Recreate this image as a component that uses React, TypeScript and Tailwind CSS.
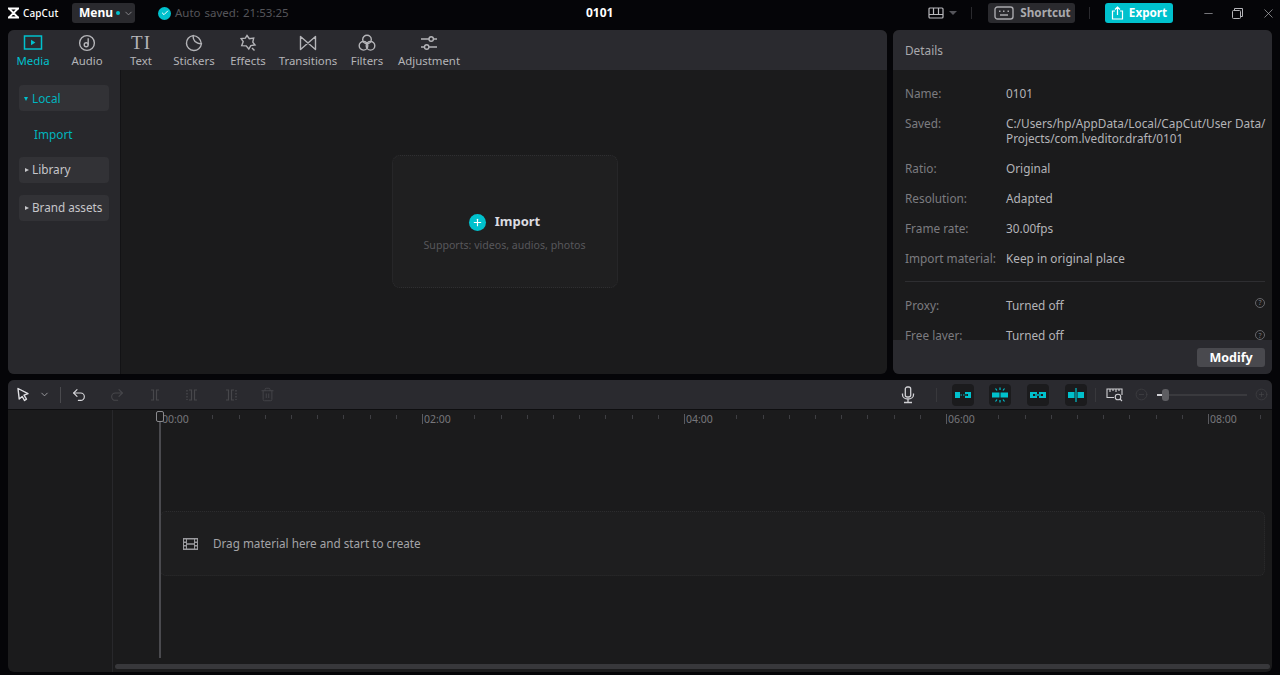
import React from 'react';
import { Minus, X, Undo2, Redo2, Trash2, ChevronDown, CirclePlus, CircleMinus, Check, Plus } from 'lucide-react';

const font = { fontFamily: '"Noto Sans", "Liberation Sans", sans-serif' };

const Glyph: React.FC<{ w?: number; h?: number; box?: string; className?: string; children: React.ReactNode }> = ({
  w = 20,
  h = 20,
  box = '0 0 20 20',
  className = '',
  children
}) => (
  <svg width={w} height={h} viewBox={box} fill="none" stroke="currentColor" strokeWidth="1.4" className={className}>
    {children}
  </svg>
);

const tabs: { label: string; width: string; icon: React.ReactNode; active?: boolean }[] = [
  {
    label: 'Media',
    width: 'w-[50px]',
    active: true,
    icon: (
      <Glyph>
        <rect x="1.5" y="3" width="17" height="13" strokeWidth="1.5" />
        <path d="M8 6.8v5.4l4.4-2.7z" fill="currentColor" stroke="none" />
      </Glyph>
    )
  },
  {
    label: 'Audio',
    width: 'w-[58px]',
    icon: (
      <Glyph>
        <circle cx="10" cy="10" r="7.4" />
        <circle cx="9.2" cy="11.8" r="2" />
        <path d="M11.2 11.8V5.2" />
      </Glyph>
    )
  },
  {
    label: 'Text',
    width: 'w-[50px]',
    icon: (
      <span className="text-[19px] leading-[20px] tracking-[1px]" style={{ fontFamily: '"Liberation Serif", serif' }}>
        TI
      </span>
    )
  },
  {
    label: 'Stickers',
    width: 'w-[56px]',
    icon: (
      <Glyph>
        <path d="M17.4 11A7.5 7.5 0 1 1 9 2.6c0 4 1 8 8.4 8.4z" />
        <path d="M9 2.6c4.400 0 8 3.500 8.400 8.400" />
      </Glyph>
    )
  },
  {
    label: 'Effects',
    width: 'w-[52px]',
    icon: (
      <Glyph>
        <path d="M9 2.500l2.300 3.200 4.400-.7-.9 4.200 2.200 2.800-4.200.6-2 3.400-2.600-3.100-4.500-.2 1.500-4-2.100-3.200 4.300-.3z" />
        <path d="M14 15l2.500 2.500" />
      </Glyph>
    )
  },
  {
    label: 'Transitions',
    width: 'w-[68px]',
    icon: (
      <Glyph>
        <path d="M2.500 3.500v13L17.500 3.500v13z" strokeLinejoin="round" />
      </Glyph>
    )
  },
  {
    label: 'Filters',
    width: 'w-[50px]',
    icon: (
      <Glyph>
        <circle cx="10" cy="6.500" r="4.300" />
        <circle cx="6.500" cy="12.800" r="4.300" />
        <circle cx="13.500" cy="12.800" r="4.300" />
      </Glyph>
    )
  },
  {
    label: 'Adjustment',
    width: 'w-[74px]',
    icon: (
      <Glyph>
        <path d="M2 6h8M14.500 6H18M2 14h3.500M10 14h8" />
        <circle cx="12.200" cy="6" r="2.200" />
        <circle cx="7.700" cy="14" r="2.200" />
      </Glyph>
    )
  }
];

const details: { label: string; value: React.ReactNode; height: string }[] = [
  { label: 'Name:', value: '0101', height: 'h-[30px]' },
  {
    label: 'Saved:',
    value: (
      <>
        C:/Users/hp/AppData/Local/CapCut/User Data/
        <br />
        Projects/com.lveditor.draft/0101
      </>
    ),
    height: 'h-[45px]'
  },
  { label: 'Ratio:', value: 'Original', height: 'h-[30px]' },
  { label: 'Resolution:', value: 'Adapted', height: 'h-[30px]' },
  { label: 'Frame rate:', value: '30.00fps', height: 'h-[30px]' },
  { label: 'Import material:', value: 'Keep in original place', height: 'h-[30px]' }
];

const HelpDot = () => (
  <span className="flex h-[10px] w-[10px] items-center justify-center rounded-full border border-[#66666a] text-[7px] leading-none text-[#77777b]">
    ?
  </span>
);

const SplitIcon: React.FC<{ mode: number }> = ({ mode }) => (
  <Glyph w={14} h={14} box="0 0 14 14" className="text-[#47474b]">
    <path d="M3 2h2.500v10H3M11 2H8.500v10H11" strokeWidth="1.200" />
    {mode === 1 && <path d="M1 2v10" strokeDasharray="1.500 1.500" />}
    {mode === 2 && <path d="M13 2v10" strokeDasharray="1.500 1.500" />}
  </Glyph>
);

const SnapButton: React.FC<{ children: React.ReactNode }> = ({ children }) => (
  <span className="flex h-[22px] w-[22px] items-center justify-center rounded-[4px] bg-[#1b1b1d] text-[#00c1cd]">
    <svg width="18" height="18" viewBox="0 0 18 18" fill="none" stroke="currentColor" strokeWidth="1.200">
      {children}
    </svg>
  </span>
);

const rulerGroups = ['00:00', '02:00', '04:00', '06:00', '08:00'];

const App: React.FC = () => {
  return (
    <div className="flex h-[675px] w-[1280px] flex-col overflow-hidden bg-[#050508] text-[11.8px] text-[#c6c6ca]" style={font}>
      {/* Title bar */}
      <header className="relative flex h-[30px] shrink-0 items-start pt-[3px]">
        <div className="ml-[7px] flex h-[20px] w-[65px] items-center gap-[3px] text-white">
          <svg width="13" height="12" viewBox="0 0 13 12" fill="none" stroke="currentColor" strokeWidth="1.800">
            <path d="M1 1.500h11M1 10.500h11M2 1.500l4.500 4.500L2 10.500M11 1.500L6.500 6l4.500 4.500" />
          </svg>
          <span className="text-[10px] font-medium leading-none tracking-[0.1px]">CapCut</span>
        </div>
        <button className="flex h-[20px] w-[63px] items-center rounded-[3px] bg-[#2a2a2e] pl-[7px] text-[12px] font-bold text-white">
          Menu
          <span className="ml-[3px] h-[4px] w-[4px] rounded-full bg-[#00c1cd]" />
          <ChevronDown size={11} className="ml-[3px] text-[#8b8b90]" />
        </button>
        <div className="ml-[23px] flex h-[20px] items-center gap-[4px]">
          <span className="flex h-[13px] w-[13px] items-center justify-center rounded-full bg-[#00c1cd] text-white">
            <Check size={8} strokeWidth={3} />
          </span>
          <span className="text-[11.5px] text-[#55555a] [word-spacing:1px]">Auto saved: 21:53:25</span>
        </div>
        <div className="absolute left-[586px] top-[3px] flex h-[20px] items-center text-[12px] font-bold text-white">0101</div>
        <div className="ml-auto flex h-[20px] items-center text-[#b9b9bd]">
          <svg width="16" height="12" viewBox="0 0 16 12" fill="none" stroke="currentColor" strokeWidth="1.200">
            <rect x="1" y="1" width="14" height="10" rx="1" />
            <path d="M1 7.500h14M5.500 1v6.500M10.500 1v6.500" />
          </svg>
          <span className="ml-[5px] h-0 w-0 border-x-[4px] border-t-[4px] border-x-transparent border-t-[#55555a]" />
          <span className="ml-[14px] h-[12px] w-px bg-[#2a2a2e]" />
          <button className="ml-[16px] flex h-[20px] w-[87px] items-center justify-center gap-[6px] rounded-[3px] bg-[#2a2a2e] pl-[2px] text-[11.7px] font-bold text-[#a9a9ad]">
            <svg width="20" height="14" viewBox="0 0 20 14" fill="none" stroke="currentColor" strokeWidth="1.400">
              <rect x="1" y="1" width="18" height="12" rx="2.500" />
              <path d="M5 5.300h1.500M9 5.300h1.500M13.500 5.300H15M6 9h8" />
            </svg>
            Shortcut
          </button>
          <span className="ml-[14px] h-[12px] w-px bg-[#2a2a2e]" />
          <button className="ml-[15px] flex h-[20px] w-[68px] items-center justify-center gap-[5px] rounded-[3px] bg-[#00c1cd] text-[11.7px] font-bold text-white">
            <svg width="13" height="14" viewBox="0 0 13 14" fill="none" stroke="currentColor" strokeWidth="1.200">
              <path d="M4 5H1.500v8h10V5H9M6.500 9V1.200M4 3.500l2.500-2.500L9 3.500" />
            </svg>
            Export
          </button>
          <Minus size={13} strokeWidth={1.200} className="ml-[29px] text-[#b4b4b8]" />
          <svg width="11" height="11" viewBox="0 0 11 11" fill="none" stroke="currentColor" strokeWidth="1" className="ml-[17px] text-[#b4b4b8]">
            <rect x="0.500" y="2.500" width="8" height="8" rx="1" />
            <path d="M2.500 2.500V.500h8v8H8.500" />
          </svg>
          <X size={15} strokeWidth={1.100} className="ml-[18px] mr-[4px] text-[#b4b4b8]" />
        </div>
      </header>

      {/* Upper panels */}
      <div className="mx-[8px] flex h-[344px] shrink-0 gap-[6px]">
        <section className="flex w-[879px] flex-col overflow-hidden rounded-[6px] bg-[#1b1b1c]">
          <nav className="flex h-[40px] shrink-0 bg-[#2a2a2f]">
            {tabs.map((tab) => (
              <div
                key={tab.label}
                className={`flex flex-col items-center ${tab.width} ${tab.active ? 'text-[#00c1cd]' : 'text-[#b4b4b8]'}`}
              >
                <span className="mt-[3px] flex h-[20px] items-center">{tab.icon}</span>
                <span className="whitespace-nowrap text-[11.4px] leading-[15px]">{tab.label}</span>
              </div>
            ))}
          </nav>
          <div className="flex min-h-0 flex-1">
            <aside className="flex w-[113px] shrink-0 flex-col border-r border-[#131315] bg-[#28282c] px-[11px] pt-[15px]">
              <div className="flex h-[26px] items-center rounded-[4px] bg-[#323236] pl-[5px] pt-[1px] text-[#00b4bf]">
                <span className="h-0 w-0 border-x-[2.5px] border-t-[4px] border-x-transparent border-t-[#00c1cd]" />
                <span className="ml-[4px]">Local</span>
              </div>
              <div className="flex h-[46px] items-center pl-[15px] pt-[1px] text-[#00b4bf]">Import</div>
              <div className="flex h-[26px] items-center rounded-[4px] bg-[#323236] pl-[6px]">
                <span className="h-0 w-0 border-y-[2.5px] border-l-[4px] border-y-transparent border-l-[#c6c6ca]" />
                <span className="ml-[3px]">Library</span>
              </div>
              <div className="mt-[12px] flex h-[26px] items-center rounded-[4px] bg-[#323236] pl-[6px]">
                <span className="h-0 w-0 border-y-[2.5px] border-l-[4px] border-y-transparent border-l-[#c6c6ca]" />
                <span className="ml-[3px] whitespace-nowrap text-[11.7px]">Brand assets</span>
              </div>
            </aside>
            <div className="flex flex-1 items-start justify-center pl-[1px] pt-[85px]">
              <div className="flex h-[133px] w-[226px] flex-col items-center rounded-[8px] border border-dotted border-[#2f2f31] bg-[#1f1f20] pt-[56px]">
                <div className="flex h-[20px] items-center gap-[9px]">
                  <span className="flex h-[17px] w-[17px] items-center justify-center rounded-full bg-[#00c1cd] text-white">
                    <Plus size={11} strokeWidth={2.500} />
                  </span>
                  <span className="text-[13px] font-bold text-[#dcdce0]">Import</span>
                </div>
                <div className="mt-[5px] text-[10.6px] leading-[16px] text-[#58585c]">Supports: videos, audios, photos</div>
              </div>
            </div>
          </div>
        </section>

        <section className="flex w-[379px] flex-col overflow-hidden rounded-[6px] bg-[#1b1b1c]">
          <div className="flex h-[40px] shrink-0 items-center bg-[#2a2a2f] pl-[12px] pt-[1px] text-[#a9a9ad]">Details</div>
          <div className="min-h-0 flex-1 overflow-hidden px-[12px] pt-[9px]">
            {details.map((row) => (
              <div key={row.label} className={`flex ${row.height}`}>
                <span className="w-[101px] shrink-0 pt-[6px] leading-[17px] text-[#7c7c80]">{row.label}</span>
                <span className="whitespace-nowrap pt-[7px] leading-[15px] text-[#b4b4b8]">{row.value}</span>
              </div>
            ))}
            <div className="mt-[7px] mr-[-5px] h-px w-[360px] bg-[#2e2e31]" />
            <div className="mt-[2px] flex h-[30px] items-center pt-[14px]">
              <span className="w-[101px] text-[#7c7c80]">Proxy:</span>
              <span className="text-[#b4b4b8]">Turned off</span>
              <span className="ml-auto mb-[7px] mr-[-5px]"><HelpDot /></span>
            </div>
            <div className="mt-[10px] flex h-[24px] items-center">
              <span className="w-[101px] text-[#7c7c80]">Free layer:</span>
              <span className="text-[#b4b4b8]">Turned off</span>
              <span className="ml-auto mb-[2px] mr-[-5px]"><HelpDot /></span>
            </div>
          </div>
          <div className="flex h-[34px] shrink-0 items-start justify-end bg-[#2a2a2f] pr-[7px] pt-[8px]">
            <button className="h-[19px] w-[68px] rounded-[3px] bg-[#49494e] text-[12.5px] font-bold leading-[19px] text-white">
              Modify
            </button>
          </div>
        </section>
      </div>

      {/* Timeline */}
      <section className="relative mx-[8px] mt-[6px] flex h-[292px] shrink-0 flex-col overflow-hidden rounded-[6px] bg-[#1b1b1c]">
        <div className="flex h-[30px] shrink-0 items-center border-b border-[#0e0e10] bg-[#2a2a2f]">
          <svg width="14" height="15" viewBox="0 0 14 15" fill="none" stroke="#e0e0e4" strokeWidth="1.400" className="ml-[8px]" strokeLinejoin="round">
            <path d="M2 1.500l10 5.200-4 1.500 2.500 4-2 1.300-2.300-4-3 2.500z" />
          </svg>
          <ChevronDown size={11} className="ml-[9px] text-[#a0a0a4]" />
          <span className="ml-[10px] h-[16px] w-px bg-[#4a4a4e]" />
          <Undo2 size={16} strokeWidth={1.700} className="ml-[10px] text-[#d8d8dc]" />
          <Redo2 size={16} strokeWidth={1.600} className="ml-[22px] text-[#47474b]" />
          <span className="ml-[23px] flex"><SplitIcon mode={0} /></span>
          <span className="ml-[24px] flex"><SplitIcon mode={1} /></span>
          <span className="ml-[23px] flex"><SplitIcon mode={2} /></span>
          <Trash2 size={15} strokeWidth={1.400} className="ml-[23px] text-[#47474b]" />
          <div className="ml-auto flex items-center">
            <svg width="14" height="18" viewBox="0 0 14 18" fill="none" stroke="#d0d0d4" strokeWidth="1.300">
              <rect x="4.300" y="1" width="5.400" height="10" rx="2" />
              <path d="M1.500 7.500v1.500a5.500 4 0 0 0 11 0V7.500M7 13v3M3 16.500h8" />
            </svg>
            <span className="ml-[21px] h-[14px] w-px bg-[#38383c]" />
            <span className="ml-[15px] flex">
              <SnapButton>
                <rect x="1" y="6" width="5" height="6" fill="currentColor" stroke="none" />
                <path d="M11 6h6v6h-6v-2h3V8h-3z" fill="currentColor" stroke="none" />
                <path d="M6.500 9h6" strokeDasharray="1.500 1" />
              </SnapButton>
            </span>
            <span className="ml-[15px] flex">
              <SnapButton>
                <rect x="1" y="6.500" width="7.500" height="5" fill="currentColor" stroke="none" />
                <rect x="9.500" y="6.500" width="7.500" height="5" fill="currentColor" stroke="none" />
                <path d="M9 1.500v2.500M4.500 2.500L6 4.500M13.500 2.500L12 4.500M9 14v2.500M4.500 15.500L6 13.500M13.500 15.500L12 13.500" />
              </SnapButton>
            </span>
            <span className="ml-[16px] flex">
              <SnapButton>
                <path d="M1 6h7v2H4v2h4v2H1zM17 6h-7v2h4v2h-4v2h7z" fill="currentColor" stroke="none" />
                <path d="M6 9h6" strokeWidth="1.600" />
              </SnapButton>
            </span>
            <span className="ml-[16px] flex">
              <SnapButton>
                <rect x="1" y="6" width="6.500" height="6" fill="currentColor" stroke="none" />
                <rect x="10.500" y="6" width="6.500" height="6" fill="currentColor" stroke="none" />
                <path d="M9 2v14" />
              </SnapButton>
            </span>
            <span className="ml-[8px] h-[14px] w-px bg-[#38383c]" />
            <svg width="17" height="15" viewBox="0 0 17 15" fill="none" stroke="#d0d0d4" strokeWidth="1.100" className="ml-[10px]">
              <path d="M8 10.500H1V2h15v6" />
              <path d="M4 2v3M7 2v2M10 2v3M13 2v2" />
              <circle cx="12" cy="10" r="2.800" />
              <path d="M14 12l2 2" />
            </svg>
            <CircleMinus size={13} strokeWidth={1.100} className="ml-[12px] text-[#47474b]" />
            <div className="relative ml-[9px] h-[2px] w-[90px] bg-[#3a3a3e]">
              <span className="absolute left-0 top-0 h-[2px] w-[6px] bg-[#d0d0d4]" />
              <span className="absolute left-[5px] top-[-5px] h-[12px] w-[7px] rounded-[3px] bg-[#5e5e62]" />
            </div>
            <CirclePlus size={13} strokeWidth={1.100} className="ml-[8px] mr-[4px] text-[#47474b]" />
          </div>
        </div>

        <div className="flex min-h-0 flex-1">
          <div className="w-[105px] shrink-0 border-r border-[#28282b]" />
          <div className="relative min-w-0 flex-1">
            <div className="flex h-[20px] pl-[47px]">
              {rulerGroups.map((time) => (
                <div key={time} className="flex w-[262px] shrink-0">
                  <div className="mt-[4px] h-[10px] w-[52.4px] shrink-0 border-l border-[#5a5a5e] pl-[1px] text-[10.5px] leading-[10px] text-[#77777b]">
                    {time}
                  </div>
                  {Array.from({ length: 8 }).map((_, i) => (
                    <div key={i} className="mt-[5px] h-[4px] w-[26.2px] shrink-0 border-l border-[#3e3e42]" />
                  ))}
                </div>
              ))}
            </div>
            <div className="ml-[47px] mr-[7px] mt-[81px] flex h-[65px] items-center rounded-[6px] border border-dotted border-[#2c2c2e] bg-[#1e1e1f] pl-[22px]">
              <svg width="15" height="12" viewBox="0 0 15 12" className="text-[#9a9a9e]" fill="currentColor">
                <path d="M0 0h15v12H0zM3 1.500H1v2h2zm0 3.500H1v2h2zm0 3.500H1v2h2zm11-7h-2v2h2zm0 3.500h-2v2h2zm0 3.500h-2v2h2zM11 1.500H4v3.700h7zm0 5.300H4v3.700h7z" fillRule="evenodd" />
              </svg>
              <span className="ml-[15px] text-[11.7px] text-[#a4a4a8]">Drag material here and start to create</span>
            </div>
            <div className="absolute bottom-[3px] left-[2px] right-[2px] h-[5px] rounded-full bg-[#38383b]" />
          </div>
        </div>

        {/* Playhead */}
        <div className="absolute left-[148px] top-[31px] flex flex-col items-center">
          <span className="h-[11px] w-[8px] rounded-[2px] border border-[#8a8a8e] bg-[#1b1b1c]" />
          <span className="h-[236px] w-[2px] bg-[#4a4a4e]" />
        </div>
      </section>
    </div>
  );
};

export default App;
